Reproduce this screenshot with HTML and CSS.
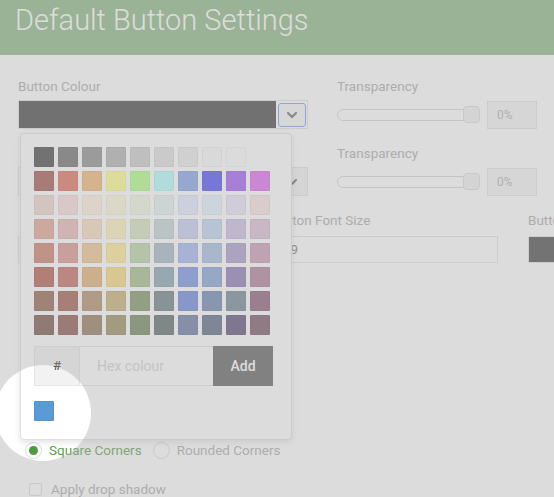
FILE: index.html
```html
<!DOCTYPE html>
<html lang="en">
<head>
<meta charset="utf-8">
<title>Default Button Settings</title>
<link rel="stylesheet" href="styles.css">
</head>
<body>
<header class="page-header">
  <h1 class="page-title">Default Button Settings</h1>
</header>

<main class="settings">
  <div class="row row-two">
    <div class="field">
      <div class="label">Button Colour</div>
      <div class="colour-field">
        <div class="colour-select">
          <span class="colour-value" style="background:#404040"></span>
          <span class="colour-toggle is-focused">
            <svg class="chevron" width="10" height="6" viewBox="0 0 10 6"><polyline points="1,1 5,5 9,1" /></svg>
          </span>
        </div>

        <div class="palette-popup">
          <div class="swatches">
            <span class="swatch" style="background:#424242"></span>
            <span class="swatch" style="background:#6c6c6c"></span>
            <span class="swatch" style="background:#8c8c8c"></span>
            <span class="swatch" style="background:#b0b0b0"></span>
            <span class="swatch" style="background:#cbcbcb"></span>
            <span class="swatch" style="background:#dfdfdf"></span>
            <span class="swatch" style="background:#e9e9e9"></span>
            <span class="swatch" style="background:#f9f9f9"></span>
            <span class="swatch" style="background:#fdfdfd"></span>
            <span class="swatch swatch-blank" style="background:#ffffff"></span>

            <span class="swatch" style="background:#a2534b"></span>
            <span class="swatch" style="background:#e26c5a"></span>
            <span class="swatch" style="background:#f0b773"></span>
            <span class="swatch" style="background:#ffff8c"></span>
            <span class="swatch" style="background:#b0ff85"></span>
            <span class="swatch" style="background:#b0ffff"></span>
            <span class="swatch" style="background:#85a2e9"></span>
            <span class="swatch" style="background:#4b4bf8"></span>
            <span class="swatch" style="background:#a25af8"></span>
            <span class="swatch" style="background:#e268f0"></span>

            <span class="swatch" style="background:#f0d4cd"></span>
            <span class="swatch" style="background:#f8dbdb"></span>
            <span class="swatch" style="background:#fff0db"></span>
            <span class="swatch" style="background:#fff8db"></span>
            <span class="swatch" style="background:#f0f8e2"></span>
            <span class="swatch" style="background:#e2f0f0"></span>
            <span class="swatch" style="background:#e2e9ff"></span>
            <span class="swatch" style="background:#e2f0ff"></span>
            <span class="swatch" style="background:#e9e2f8"></span>
            <span class="swatch" style="background:#f8e2e2"></span>

            <span class="swatch" style="background:#e2a593"></span>
            <span class="swatch" style="background:#e9b7b7"></span>
            <span class="swatch" style="background:#f8dbbe"></span>
            <span class="swatch" style="background:#fff0be"></span>
            <span class="swatch" style="background:#d4e2be"></span>
            <span class="swatch" style="background:#c5d4d4"></span>
            <span class="swatch" style="background:#c5cdf0"></span>
            <span class="swatch" style="background:#bed4f0"></span>
            <span class="swatch" style="background:#cdbee2"></span>
            <span class="swatch" style="background:#dbbed4"></span>

            <span class="swatch" style="background:#cd7e68"></span>
            <span class="swatch" style="background:#db938c"></span>
            <span class="swatch" style="background:#f0c58c"></span>
            <span class="swatch" style="background:#ffe993"></span>
            <span class="swatch" style="background:#b7d4a2"></span>
            <span class="swatch" style="background:#a2b7c5"></span>
            <span class="swatch" style="background:#a2b7f0"></span>
            <span class="swatch" style="background:#a2bee2"></span>
            <span class="swatch" style="background:#a99acd"></span>
            <span class="swatch" style="background:#cd9ab7"></span>

            <span class="swatch" style="background:#b05a4b"></span>
            <span class="swatch" style="background:#c56861"></span>
            <span class="swatch" style="background:#e2b06f"></span>
            <span class="swatch" style="background:#f8db76"></span>
            <span class="swatch" style="background:#a2be85"></span>
            <span class="swatch" style="background:#85a2b0"></span>
            <span class="swatch" style="background:#7693e2"></span>
            <span class="swatch" style="background:#85a2d4"></span>
            <span class="swatch" style="background:#8c76b7"></span>
            <span class="swatch" style="background:#b07e9a"></span>

            <span class="swatch" style="background:#93614b"></span>
            <span class="swatch" style="background:#a25a4b"></span>
            <span class="swatch" style="background:#b08c68"></span>
            <span class="swatch" style="background:#c5b06f"></span>
            <span class="swatch" style="background:#7e9361"></span>
            <span class="swatch" style="background:#687e85"></span>
            <span class="swatch" style="background:#6885db"></span>
            <span class="swatch" style="background:#6885b0"></span>
            <span class="swatch" style="background:#6f8593"></span>
            <span class="swatch" style="background:#8c5a76"></span>

            <span class="swatch" style="background:#765344"></span>
            <span class="swatch" style="background:#8c534b"></span>
            <span class="swatch" style="background:#93765a"></span>
            <span class="swatch" style="background:#9a8c5a"></span>
            <span class="swatch" style="background:#6f855a"></span>
            <span class="swatch" style="background:#5a6868"></span>
            <span class="swatch" style="background:#6876a2"></span>
            <span class="swatch" style="background:#5a6885"></span>
            <span class="swatch" style="background:#5a4b76"></span>
            <span class="swatch" style="background:#765361"></span>
          </div>

          <div class="hex-row">
            <span class="hex-hash">#</span>
            <input class="hex-input" type="text" placeholder="Hex colour">
            <button class="hex-add" type="button">Add</button>
          </div>

          <div class="recent">
            <span class="swatch" style="background:#5a9ad6"></span>
          </div>
        </div>
      </div>
    </div>

    <div class="field">
      <div class="label">Transparency</div>
      <div class="range-row">
        <div class="range"><span class="range-thumb"></span></div>
        <div class="range-value">0%</div>
      </div>
    </div>
  </div>

  <div class="row row-two">
    <div class="field">
      <div class="label"></div>
      <div class="colour-select">
        <span class="colour-value" style="background:#ffffff"></span>
        <span class="colour-toggle">
          <svg class="chevron" width="10" height="6" viewBox="0 0 10 6"><polyline points="1,1 5,5 9,1" /></svg>
        </span>
      </div>
    </div>
    <div class="field">
      <div class="label">Transparency</div>
      <div class="range-row">
        <div class="range"><span class="range-thumb"></span></div>
        <div class="range-value">0%</div>
      </div>
    </div>
  </div>

  <div class="row row-three">
    <div class="field">
      <div class="label"></div>
      <div class="text-input control-3"></div>
    </div>
    <div class="field">
      <div class="label">Button Font Size</div>
      <div class="text-input control-3">19</div>
    </div>
    <div class="field">
      <div class="label">Button Border Colour</div>
      <div class="colour-box control-3"><span class="colour-box-fill"></span></div>
    </div>
  </div>

  <div class="field corners">
    <div class="radio-group">
      <span class="radio is-checked"></span>
      <span class="radio-label is-active">Square Corners</span>
      <span class="radio"></span>
      <span class="radio-label">Rounded Corners</span>
    </div>
  </div>

  <div class="check-row">
    <span class="checkbox"></span>
    <span class="check-label">Apply drop shadow</span>
  </div>
</main>

<div class="spotlight"></div>
</body>
</html>
```

FILE: styles.css
```css
html, body {
  margin: 0;
  padding: 0;
  overflow: hidden;
}

body {
  position: relative;
  width: 554px;
  height: 497px;
  background: #ffffff;
  font-family: Roboto, "Liberation Sans", sans-serif;
  color: #ababab;
}

/* header */
.page-header {
  box-sizing: border-box;
  height: 55px;
  padding: 3px 0 0 15px;
  background: #8ab583;
}

.page-title {
  margin: 0;
  font-size: 29px;
  line-height: 34px;
  font-weight: 300;
  color: #ffffff;
  white-space: nowrap;
}

/* form */
.settings {
  padding: 23px 0 0 18px;
}

.row {
  display: grid;
  column-gap: 29px;
  margin-bottom: 16px;
}

.row-two {
  grid-template-columns: 290px 200px;
}

.row-three {
  grid-template-columns: 224px 226px minmax(0, 1fr);
  column-gap: 30px;
  margin-bottom: 0;
}

.field {
  min-width: 0;
}

.label {
  height: 16px;
  font-size: 13.5px;
  line-height: 16px;
  color: #ababab;
  margin-bottom: 6px;
  white-space: nowrap;
}

.row-three .label {
  margin-bottom: 8px;
}

/* colour select */
.colour-field {
  position: relative;
}

.colour-select {
  box-sizing: border-box;
  display: flex;
  align-items: center;
  height: 29px;
  border: 1px solid #e2e2e2;
}

.colour-value {
  flex: 1;
  align-self: stretch;
}

.colour-toggle {
  box-sizing: border-box;
  display: flex;
  align-items: center;
  justify-content: center;
  align-self: stretch;
  width: 32px;
  background: #f2f2f2;
  border-left: 1px solid #e2e2e2;
}

.colour-toggle.is-focused {
  align-self: center;
  width: 28px;
  height: 24px;
  margin: 0 1px 0 2px;
  border: 1px solid #759af8;
  border-radius: 3px;
  background: #f7f7f7;
}

.chevron polyline {
  fill: none;
  stroke: #6c6c6c;
  stroke-width: 2.2;
  stroke-linecap: round;
  stroke-linejoin: round;
}

/* range */
.range-row {
  display: flex;
  align-items: center;
  height: 29px;
}

.range {
  position: relative;
  box-sizing: border-box;
  width: 143px;
  height: 12px;
  border: 1px solid #d4d4d4;
  border-radius: 6px;
  background: #ffffff;
}

.range-thumb {
  position: absolute;
  right: -1px;
  top: -3.5px;
  box-sizing: border-box;
  width: 17px;
  height: 17px;
  border: 1px solid #dbdbdb;
  border-radius: 4px;
  background: #f0f0f0;
}

.range-value {
  box-sizing: border-box;
  width: 50px;
  height: 28px;
  margin-left: 7px;
  padding-left: 9px;
  border: 1px solid #e2e2e2;
  background: #f4f4f4;
  font-size: 12px;
  line-height: 26px;
  color: #b0b0b0;
}

/* row three */
.control-3 {
  box-sizing: border-box;
  height: 27px;
  border: 1px solid #e2e2e2;
}

.text-input {
  padding-left: 10px;
  font-size: 13.5px;
  line-height: 25px;
  color: #7a7a7a;
  white-space: nowrap;
}

.colour-box {
  display: flex;
  width: 180px;
}

.colour-box-fill {
  flex: 1;
  background: #444444;
}

/* corners */
.corners {
  margin-top: 179px;
}

.radio-group {
  display: flex;
  align-items: center;
  height: 17px;
  padding-left: 7px;
}

.radio {
  position: relative;
  box-sizing: border-box;
  width: 17px;
  height: 17px;
  border: 1px solid #dbdbdb;
  border-radius: 50%;
  background: #ffffff;
  margin-left: 11px;
}

.radio:first-child {
  margin-left: 0;
}

.radio.is-checked::after {
  content: "";
  position: absolute;
  left: 3px;
  top: 3px;
  width: 9px;
  height: 9px;
  border-radius: 50%;
  background: #4c9c3c;
}

.radio-label {
  margin-left: 7px;
  font-size: 13.5px;
  line-height: 17px;
  color: #ababab;
  white-space: nowrap;
}

.radio-label.is-active {
  color: #5b9e4a;
}

.check-row {
  display: flex;
  align-items: center;
  margin-top: 23px;
  padding-left: 11px;
  height: 14px;
}

.checkbox {
  box-sizing: border-box;
  width: 13px;
  height: 13px;
  border: 1px solid #dcdcdc;
  border-radius: 2px;
}

.check-label {
  margin-left: 9px;
  font-size: 13.5px;
  color: #ababab;
  white-space: nowrap;
}

/* palette popup */
.palette-popup {
  position: absolute;
  z-index: 5;
  left: 2px;
  top: calc(100% + 4px);
  box-sizing: border-box;
  width: 272px;
  padding: 13px 0 18px 13px;
  border: 1px solid #e0e0e0;
  border-radius: 4px;
  background: #ffffff;
  box-shadow: 0 2px 6px rgba(0, 0, 0, 0.12);
}

.swatches {
  display: grid;
  grid-template-columns: repeat(10, 20px);
  gap: 4px;
}

.swatch {
  display: block;
  width: 20px;
  height: 20px;
  border-radius: 1px;
  box-shadow: inset 0 0 0 1px rgba(0, 0, 0, 0.05);
}

.swatch-blank {
  box-shadow: none;
}

.hex-row {
  box-sizing: border-box;
  display: flex;
  width: 239px;
  height: 40px;
  margin-top: 11px;
  border: 1px solid #e5e5e5;
}

.hex-hash {
  box-sizing: border-box;
  width: 45px;
  border-right: 1px solid #e5e5e5;
  background: #f2f2f2;
  text-align: center;
  font-size: 13px;
  line-height: 38px;
  color: #333333;
}

.hex-input {
  flex: 1;
  min-width: 0;
  border: 0;
  padding: 0 0 0 17px;
  margin: 0;
  background: #ffffff;
  font: inherit;
  font-size: 14px;
  outline: none;
}

.hex-input::placeholder {
  color: #d2d2d2;
}

.hex-add {
  width: 60px;
  margin: -1px -1px -1px 0;
  border: 0;
  padding: 0;
  background: #5d5d5d;
  color: #ffffff;
  font-family: inherit;
  font-size: 14px;
  font-weight: 500;
}

.recent {
  margin-top: 15px;
}

/* walkthrough spotlight */
.spotlight {
  position: absolute;
  z-index: 10;
  left: -5px;
  top: 365px;
  width: 96px;
  height: 96px;
  border-radius: 50%;
  box-shadow: 0 0 3px 1000px rgba(176, 176, 176, 0.44);
  pointer-events: none;
}
```
